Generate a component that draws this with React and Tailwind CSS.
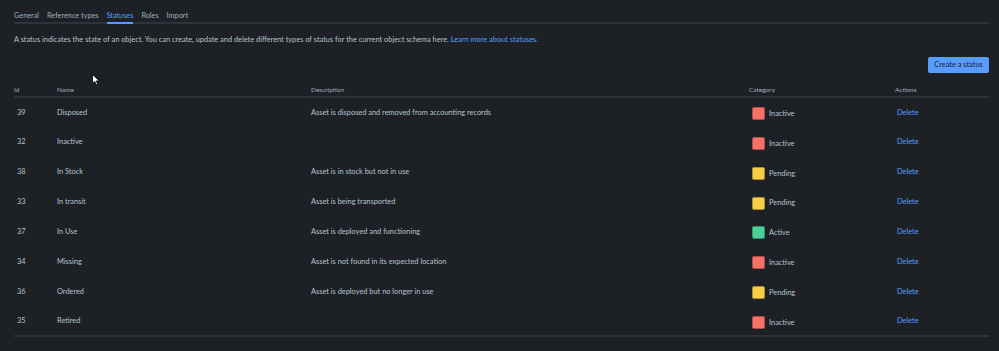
import React from 'react';

const tabs = ['General', 'Reference types', 'Statuses', 'Roles', 'Import'];

const swatch = {
  Inactive: 'bg-[#f87168]',
  Pending: 'bg-[#f5cd47]',
  Active: 'bg-[#4bce97]',
};

const statuses = [
  { id: 39, name: 'Disposed', description: 'Asset is disposed and removed from accounting records', category: 'Inactive' },
  { id: 32, name: 'Inactive', description: '', category: 'Inactive' },
  { id: 38, name: 'In Stock', description: 'Asset is in stock but not in use', category: 'Pending' },
  { id: 33, name: 'In transit', description: 'Asset is being transported', category: 'Pending' },
  { id: 37, name: 'In Use', description: 'Asset is deployed and functioning', category: 'Active' },
  { id: 34, name: 'Missing', description: 'Asset is not found in its expected location', category: 'Inactive' },
  { id: 36, name: 'Ordered', description: 'Asset is deployed but no longer in use', category: 'Pending' },
  { id: 35, name: 'Retired', description: '', category: 'Inactive' },
];

const App = () => {
  return (
    <div className="relative min-h-[351px] w-[999px] bg-[#1d2125] pl-[14px] pr-[10px] text-[7.4px] text-[#b6c2cf] font-['Lato',sans-serif]">
      {/* tabs */}
      <div className="flex gap-[8px] border-b-2 border-[#2c333a] pt-[11px] text-[7.3px] leading-[10px]">
        {tabs.map((tab) => (
          <div
            key={tab}
            className={
              tab === 'Statuses'
                ? 'pb-[1px] -mb-[2px] border-b-2 border-[#579dff] text-[#579dff]'
                : 'pb-[1px] text-[#9fadbc]'
            }
          >
            {tab}
          </div>
        ))}
      </div>

      <p className="mt-[11px] text-[7.4px] leading-[10px]">
        A status indicates the state of an object. You can create, update and delete different types of status for the
        current object schema here. <span className="text-[#579dff]">Learn more about statuses.</span>
      </p>

      <div className="mt-[12px] flex justify-end">
        <button className="h-[16px] w-[61px] rounded-[2px] bg-[#579dff] text-[7.4px] text-[#1d2125]">Create a status</button>
      </div>

      <table className="mt-[12px] w-[975px] table-fixed border-collapse">
        <thead>
          <tr className="border-b-2 border-[#2c333a] text-left text-[6.5px] text-[#9fadbc]">
            <th className="w-[43px] pb-[1px] font-normal">Id</th>
            <th className="w-[254px] pb-[1px] font-normal">Name</th>
            <th className="w-[438px] pb-[1px] font-normal">Description</th>
            <th className="w-[146px] pb-[1px] font-normal">Category</th>
            <th className="w-[94px] pb-[1px] font-normal">Actions</th>
          </tr>
        </thead>
        <tbody className="border-b-2 border-[#2c333a]">
          {statuses.map((s) => (
            <tr key={s.id} className="h-[29.95px]">
              <td className="pl-[3px]">{s.id}</td>
              <td>{s.name}</td>
              <td>{s.description}</td>
              <td>
                <div className="flex items-center gap-[4px] pl-[3px] pt-[3px]">
                  <span className={`h-[13px] w-[13px] rounded-[2px] border border-black/30 ${swatch[s.category]}`} />
                  <span>{s.category}</span>
                </div>
              </td>
              <td className="pl-[2px] text-[#579dff]">Delete</td>
            </tr>
          ))}
        </tbody>
      </table>

      {/* mouse cursor */}
      <svg className="absolute left-[92px] top-[74px]" width="8" height="12" viewBox="0 0 8 12">
        <path d="M0.5 0.5 L0.5 9.5 L2.8 7.4 L4.4 11 L5.8 10.4 L4.3 6.9 L7.3 6.9 Z" fill="#fff" stroke="#000" strokeWidth="0.8" />
      </svg>
    </div>
  );
};

export default App;
